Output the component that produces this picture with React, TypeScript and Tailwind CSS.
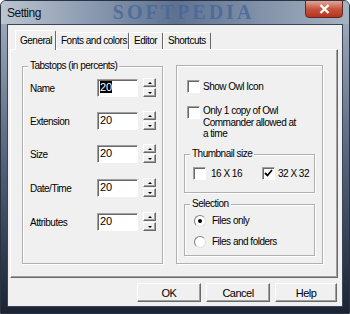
import React from "react"

// classic 3D edges
const raised = "border border-t-white border-l-white border-r-[#696969] border-b-[#696969] shadow-[inset_-1px_-1px_0_#a0a0a0]"
const sunken = "border border-t-[#a0a0a0] border-l-[#a0a0a0] border-r-white border-b-white shadow-[inset_1px_1px_0_#696969]"

function GroupBox({ title, className, children }: { title?: string; className: string; children?: React.ReactNode }) {
  return (
    <div className={"relative border border-[#b0b0b0] shadow-[inset_1px_1px_0_#fff,1px_1px_0_#fff] " + className}>
      {title && (
        <span className="absolute -top-[7px] left-[5px] bg-[#f0f0f0] px-[2px] leading-[12px] whitespace-nowrap">{title}</span>
      )}
      {children}
    </div>
  )
}

function Spin() {
  return (
    <div className="flex flex-col gap-[1px] ml-[5px] -mt-[1px]">
      <div className={"w-[13px] h-[9px] bg-[#f0f0f0] flex items-center justify-center " + raised}>
        <div className="w-0 h-0 border-x-[2px] border-x-transparent border-b-[2px] border-b-black" />
      </div>
      <div className={"w-[13px] h-[9px] bg-[#f0f0f0] flex items-center justify-center " + raised}>
        <div className="w-0 h-0 border-x-[2px] border-x-transparent border-t-[2px] border-t-black" />
      </div>
    </div>
  )
}

function Check({ checked }: { checked?: boolean }) {
  return (
    <div className={"w-[13px] h-[13px] bg-white shrink-0 flex items-center justify-center " + sunken}>
      {checked && (
        <svg width="9" height="9" viewBox="0 0 9 9">
          <path d="M1 4 L3.5 6.5 L8 1" stroke="#000" strokeWidth="1.8" fill="none" />
        </svg>
      )}
    </div>
  )
}

function Radio({ on }: { on?: boolean }) {
  return (
    <div className="w-[12px] h-[12px] rounded-full bg-white border border-t-[#808080] border-l-[#808080] border-r-[#e0e0e0] border-b-[#e0e0e0] flex items-center justify-center shrink-0">
      {on && <div className="w-[4px] h-[4px] rounded-full bg-black" />}
    </div>
  )
}

const rows = [
  { label: "Name", mt: "mt-[12px]", sel: true },
  { label: "Extension", mt: "mt-[15px]" },
  { label: "Size", mt: "mt-[15px]" },
  { label: "Date/Time", mt: "mt-[16px]" },
  { label: "Attributes", mt: "mt-[16px]" },
]

export default function App() {
  return (
    <div className="w-[350px] h-[314px] flex flex-col rounded-t-[6px] overflow-hidden border border-[#2a3344] bg-linear-to-b from-[#a9b4c3] via-[#55647c] to-[#1c2433] font-['Liberation_Sans',Arial,sans-serif] text-[10px] leading-[12px] tracking-[-0.5px] text-black">
      {/* title bar */}
      <div className="h-[23px] flex items-start bg-linear-to-r from-[#bcc5d1] via-[#5f7391] to-[#a7b2c1]">
        <span className="pl-[6px] pt-[5px] text-[12px] leading-[14px] text-[#111]">Setting</span>
        <span className="ml-[72px] mt-[1px] font-['Liberation_Serif',serif] font-bold text-[20px] leading-[20px] tracking-[3px] text-[#47679a] opacity-80 whitespace-nowrap">SOFTPEDIA</span>
        <div className="ml-auto mr-[6px] -mt-[1px] w-[38px] h-[18px] shrink-0 rounded-b-[4px] border border-[#5b2a26] bg-linear-to-b from-[#e3a595] via-[#c4543f] to-[#b8321c] flex items-center justify-center">
          <svg width="11" height="10" viewBox="0 0 11 10">
            <path d="M1.5 1 L9.5 9 M9.5 1 L1.5 9" stroke="#fff" strokeWidth="2.4" />
          </svg>
        </div>
      </div>

      {/* client */}
      <div className="flex-1 mx-[6px] mb-[6px] flex flex-col bg-[#f0f0f0] border border-[#3a4456] pl-[2px] pr-[4px]">
        {/* tabs */}
        <div className="mt-[4px] h-[20px] pl-[5px] flex items-end relative z-10">
          <div className="h-[20px] w-[41px] -mb-[1px] bg-[#f0f0f0] border border-b-0 border-t-white border-l-white border-r-[#696969] rounded-t-[2px] pl-[4px] pt-[4px]">General</div>
          <div className="h-[17px] w-[73px] border border-b-0 border-t-white border-l-white border-r-[#696969] rounded-t-[2px] pl-[4px] pt-[2px]">Fonts and colors</div>
          <div className="h-[17px] w-[34px] border border-b-0 border-t-white border-l-white border-r-[#696969] rounded-t-[2px] pl-[4px] pt-[2px]">Editor</div>
          <div className="h-[17px] w-[48px] border border-b-0 border-t-white border-l-white border-r-[#696969] rounded-t-[2px] pl-[4px] pt-[2px]">Shortcuts</div>
        </div>

        {/* tab panel */}
        <div className={"h-[229px] flex items-start pl-[11px] pt-[16px] " + raised}>
          <GroupBox title="Tabstops (in percents)" className="w-[141px] h-[198px] flex flex-col">
            {rows.map((r) => (
              <div key={r.label} className={"flex items-start h-[18px] " + r.mt}>
                <span className="w-[74px] pl-[7px] pt-[4px]">{r.label}</span>
                <div className={"w-[41px] h-[18px] bg-white pl-[2px] pt-[1px] text-[11px] leading-[13px] tracking-normal " + sunken}>
                  {r.sel ? <span className="bg-black text-white">20</span> : "20"}
                </div>
                <Spin />
              </div>
            ))}
          </GroupBox>

          <GroupBox className="ml-[13px] -mt-[1px] w-[147px] h-[199px] flex flex-col">
            <div className="flex items-center mt-[14px] ml-[10px]">
              <Check />
              <span className="ml-[3px]">Show Owl Icon</span>
            </div>
            <div className="flex items-start mt-[13px] ml-[10px]">
              <Check />
              <span className="ml-[3px] w-[96px] leading-[11.5px] -mt-[1px]">Only 1 copy of Owl Commander allowed at a time</span>
            </div>
            <GroupBox title="Thumbnail size" className="ml-[7px] mt-[14px] w-[131px] h-[39px] flex items-center">
              <div className="flex items-center ml-[8px] mt-[1px] whitespace-nowrap">
                <Check />
                <span className="ml-[5px]">16 X 16</span>
              </div>
              <div className="flex items-center ml-[20px] mt-[1px] whitespace-nowrap">
                <Check checked />
                <span className="ml-[3px]">32 X 32</span>
              </div>
            </GroupBox>
            <GroupBox title="Selection" className="ml-[7px] mt-[11px] w-[131px] h-[52px] flex flex-col">
              <div className="flex items-center ml-[9px] mt-[10px]">
                <Radio on />
                <span className="ml-[6px]">Files only</span>
              </div>
              <div className="flex items-center ml-[9px] mt-[9px]">
                <Radio />
                <span className="ml-[6px]">Files and folders</span>
              </div>
            </GroupBox>
          </GroupBox>
        </div>

        {/* buttons */}
        <div className="mt-[5px] flex justify-end gap-[5px] mr-[1px]">
          <button className={"w-[64px] h-[19px] bg-[#f0f0f0] text-[11px] " + raised}>OK</button>
          <button className={"w-[64px] h-[19px] bg-[#f0f0f0] text-[11px] " + raised}>Cancel</button>
          <button className={"w-[62px] h-[19px] bg-[#f0f0f0] text-[11px] " + raised}>Help</button>
        </div>
      </div>
    </div>
  )
}
